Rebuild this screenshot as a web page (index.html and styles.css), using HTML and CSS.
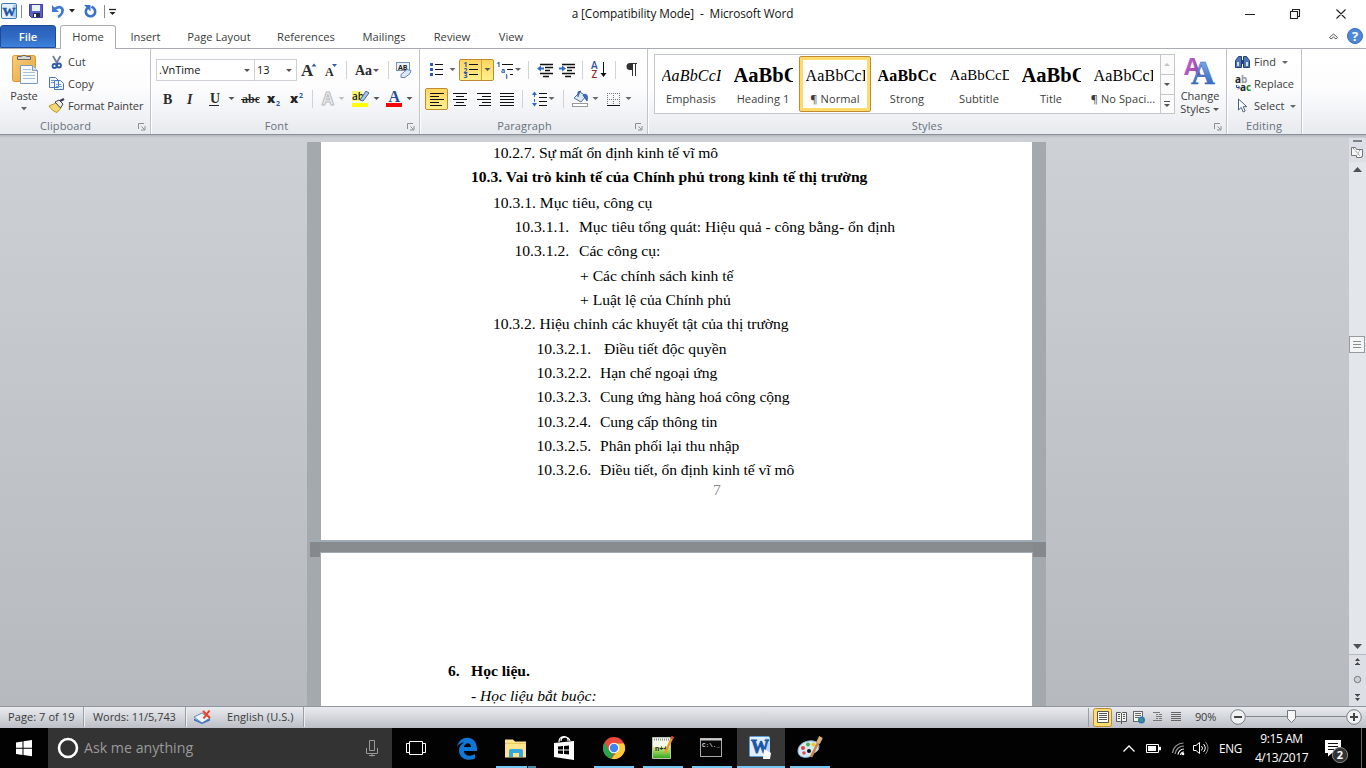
FILE: index.html
```html
<!DOCTYPE html>
<html lang="vi">
<head>
<meta charset="utf-8">
<title>a [Compatibility Mode] - Microsoft Word</title>
<link rel="stylesheet" href="styles.css">
</head>
<body>
<svg class="defs" width="0" height="0">
  <defs>
    <linearGradient id="blue" x1="0" y1="0" x2="0" y2="1"><stop offset="0" stop-color="#8db8f0"/><stop offset="1" stop-color="#2458b8"/></linearGradient>
    <linearGradient id="purple" x1="0" y1="0" x2="1" y2="1"><stop offset="0" stop-color="#d070d8"/><stop offset="1" stop-color="#8a3aa0"/></linearGradient>
    <linearGradient id="green" x1="0" y1="0" x2="0" y2="1"><stop offset="0" stop-color="#d5f08a"/><stop offset="1" stop-color="#37a81d"/></linearGradient>
    <linearGradient id="clip" x1="0" y1="0" x2="1" y2="1"><stop offset="0" stop-color="#f9cf7a"/><stop offset="1" stop-color="#e3a33c"/></linearGradient>
  </defs>
</svg>

<header class="titlebar">
  <svg width="120" height="24" viewBox="0 0 120 24">
    <rect x="1.500" y="3.500" width="15" height="15" rx="1.500" fill="#e4f0fc" stroke="#3a78bd"/>
    <path d="M13 5h3v12h-3z" fill="#a9c9ea"/>
    <text x="2.500" y="16" class="wlogo">W</text>
    <path d="M21.500 5v13M104.500 5v13" stroke="#8c8c8c"/>
    <path d="M29.500 4.500h13v13h-11l-2-2z" fill="#5a62c8" stroke="#3d3f9c"/>
    <path d="M32 5h8v6h-8z" fill="#e9f1fd"/><path d="M33 13h7v4h-7z" fill="#26284f"/><path d="M34 14h2v3h-2z" fill="#fff"/>
    <path d="M54 9.500c6-5 10-1 8 3.500-1 2-2 3-4 4" fill="none" stroke="#3f78cf" stroke-width="2.600"/><path d="M52 5v7h7z" fill="#3f78cf"/>
    <path d="M69 9h6l-3 3.500z" fill="#222"/>
    <path d="M87.500 8a4.700 4.700 0 1 0 6 0l-2-1.500" fill="none" stroke="#3a70d0" stroke-width="2.600"/><path d="M84 5h6.500v6.500z" fill="#3a70d0"/>
    <path d="M109 9.500h7" stroke="#222" stroke-width="1.300"/><path d="M109.500 12h6l-3 3z" fill="#222"/>
  </svg>
  <div class="doc-title">a [Compatibility Mode] &nbsp;-&nbsp; Microsoft Word</div>
  <svg width="136" height="24" viewBox="1230 0 136 24">
    <path d="M1245 14.500h10M1290.500 11.500h7v7h-7zM1292.500 11v-1.500h7v7h-1.500M1336.500 9.500l9 9M1345.500 9.500l-9 9" fill="none" stroke="#222" stroke-width="1.100"/>
  </svg>
</header>

<nav class="tabs">
  <div class="tab file">File</div>
  <div class="tab active">Home</div>
  <div class="tab t-insert">Insert</div>
  <div class="tab t-layout">Page Layout</div>
  <div class="tab t-refs">References</div>
  <div class="tab t-mail">Mailings</div>
  <div class="tab t-review">Review</div>
  <div class="tab t-view">View</div>
  <svg class="push" width="46" height="24" viewBox="1320 25 46 24">
    <path d="M1329.500 37.500l4-3.500 4 3.500-1.500 1.500-2.500-2-2.500 2z" fill="#fff" stroke="#555"/>
    <circle cx="1355" cy="36" r="7.500" fill="#4d88dc" stroke="#3767b5"/>
    <text x="1355" y="41" class="help" text-anchor="middle">?</text>
  </svg>
</nav>

<section class="ribbon">
  <div class="group g-clip">
    <div class="clip-body">
      <div class="paste">
        <svg width="48" height="38" viewBox="0 50 48 38">
          <rect x="12.500" y="55.500" width="23" height="26" rx="2" fill="url(#clip)" stroke="#d39b3c"/>
          <path d="M17.500 59.500v-3h4a3 2.500 0 0 1 5 0h4v3z" fill="#d8d8d8" stroke="#666"/>
          <path d="M20.500 65.500h12l5 5v13h-17z" fill="#f7fafe" stroke="#7d98bd"/>
          <path d="M32.500 65.500v5h5" fill="#cfe0f4" stroke="#7d98bd"/>
          <path d="M23 69.500h8M23 72.500h12M23 75.500h12M23 78.500h12" stroke="#a9c0de"/>
        </svg>
        <span>Paste</span>
        <svg width="8" height="6"><path d="M1 1h6l-3 3.500z" fill="#666"/></svg>
      </div>
      <div class="mini">
        <div class="mini-row"><svg width="20" height="22" viewBox="48 51 20 22"><path d="M53 56l4.500 8M60.500 56l-4.500 8" stroke="#6b7f9c" stroke-width="1.800"/><circle cx="54.500" cy="66" r="2" fill="none" stroke="#2c5cae" stroke-width="1.800"/><circle cx="59" cy="65.500" r="2" fill="none" stroke="#2c5cae" stroke-width="1.800"/></svg>Cut</div>
        <div class="mini-row"><svg width="20" height="22" viewBox="48 73 20 22"><path d="M49.500 77.500h6l3 3v7h-9zM54.500 80.500h6l3 3v6h-9z" fill="#f2f8ff" stroke="#4a76b8"/><path d="M51 80.500h4M51 82.500h3M56 84.500h5M56 86.500h6" stroke="#6d99d4"/></svg>Copy</div>
        <div class="mini-row fp"><svg width="20" height="22" viewBox="48 95 20 22"><path d="M49 106l7-3 5 5-4 4.500c-3-1-6-3-8-6.500z" fill="#f4d873" stroke="#b99225"/><path d="M55 102l4-2 4 4-2.500 4z" fill="#eee" stroke="#444"/><path d="M60 101l4-2" stroke="#443a5c" stroke-width="2.500"/></svg>Format Painter</div>
      </div>
    </div>
    <div class="group-label">Clipboard<svg class="launch" width="9" height="9"><path d="M1.500 7V1.500H7M4.500 4.500l3 3M8 4v4H4" fill="none" stroke="#8a8f96"/></svg></div>
  </div>

  <div class="group g-font">
    <div class="row">
      <div class="combo c-name">.VnTime<svg width="7" height="5"><path d="M0 1h6l-3 3z" fill="#555"/></svg></div>
      <div class="combo c-size">13<svg width="7" height="5"><path d="M0 1h6l-3 3z" fill="#555"/></svg></div>
      <svg width="120" height="22" viewBox="297 59 120 22">
        <text x="301" y="76" class="ic s17">A</text><path d="M311.500 66.500h5l-2.500-3z" fill="#2f5cb0"/>
        <text x="325" y="76" class="ic s11">A</text><path d="M332 64h5l-2.500 3z" fill="#2f5cb0"/>
        <path d="M346.500 61v18M388.500 61v18" stroke="#cfd3d8"/>
        <text x="355" y="75" class="ic s13">Aa</text><path d="M373 69h6l-3 3z" fill="#555"/>
        <rect x="396.500" y="62.500" width="13" height="8" fill="#edf3fb" stroke="#7391ba"/><text x="398" y="69.500" class="sans s8">AB</text>
        <path d="M401 74.500l6-5 4 1-1 3-5 4-4 0z" fill="#dce8f7" stroke="#6a86b0"/>
      </svg>
    </div>
    <div class="row">
      <svg width="264" height="22" viewBox="156 88 264 22">
        <text x="163" y="104" class="ic s13">B</text><text x="187" y="104" class="ic s13 it">I</text>
        <text x="210" y="103" class="ic s13">U</text><path d="M209 105.500h10" stroke="#222"/><path d="M228.500 97h6l-3 3z" fill="#555"/>
        <text x="242" y="103" class="ic s11">abc</text><path d="M241 99.500h18" stroke="#222"/>
        <text x="267" y="103" class="sans s13b">x</text><text x="276" y="106" class="sans s7 bl">2</text>
        <text x="290" y="103" class="sans s13b">x</text><text x="299" y="98" class="sans s7 bl">2</text>
        <path d="M312.500 90v18" stroke="#cfd3d8"/>
        <text x="322" y="105" class="sans ghost">A</text><path d="M338.500 97h6l-3 3z" fill="#c0c0c0"/>
        <path d="M352 91h10v10h-10z" fill="#f7f76a"/><text x="352" y="100" class="sans s10">ab</text><path d="M360 100l6-9 3 2-6 8z" fill="#a9c4ea" stroke="#49678f"/><path d="M352 103h16v4h-16z" fill="#ff0"/><path d="M373.500 97h6l-3 3z" fill="#555"/>
        <text x="388.500" y="102" class="ic s15 navy">A</text><path d="M386 103h16v4h-16z" fill="#f00"/><path d="M406.500 97h6l-3 3z" fill="#555"/>
      </svg>
    </div>
    <div class="group-label">Font<svg class="launch" width="9" height="9"><path d="M1.500 7V1.500H7M4.500 4.500l3 3M8 4v4H4" fill="none" stroke="#8a8f96"/></svg></div>
  </div>

  <div class="group g-para">
    <div class="row">
      <svg width="35" height="22" viewBox="424 59 35 22"><path d="M430 63h3v3h-3zM430 68h3v3h-3zM430 73h3v3h-3z" fill="#2f5cb0"/><path d="M435 64.500h8M435 69.500h8M435 74.500h8" stroke="#111"/><path d="M449.500 68h6l-3 3z" fill="#666"/></svg>
      <div class="pressed p-num"><svg width="33" height="20" viewBox="460 60 33 20"><text x="463.500" y="67" class="sans s7 bl">1</text><text x="463.500" y="72.500" class="sans s7 bl">2</text><text x="463.500" y="78" class="sans s7 bl">3</text><path d="M469 64.500h9M469 69.500h9M469 74.500h9" stroke="#111"/><path d="M481.500 60v20" stroke="#d6a13a"/><path d="M484.500 68h6l-3 3z" fill="#555"/></svg></div>
      <svg width="154" height="22" viewBox="494 59 154 22">
        <text x="496.500" y="67" class="sans s7 bl">1</text><text x="501" y="73" class="sans s7 bl">a</text><text x="505.500" y="79" class="sans s7 bl">i</text>
        <path d="M502 64.500h11M507 69.500h6M510 74.500h3" stroke="#111"/><path d="M515 68h6l-3 3z" fill="#666"/>
        <path d="M528.500 61v18M582.500 61v18M615.500 61v18" stroke="#cfd3d8"/>
        <path d="M540 64.500h13M545 67.500h8M545 70.500h5M540 73.500h13M543 76.500h6M562 64.500h13M567 67.500h8M567 70.500h5M562 73.500h13M565 76.500h6" stroke="#111" stroke-width="1.300"/>
        <path d="M537 68.500l4-3v2h3v2h-3v2zM566 68.500l-4-3v2h-3v2h3v2z" fill="#2e68c8"/>
        <text x="591" y="69" class="sans s10 bl">A</text><text x="591.500" y="77.500" class="sans s10 red">Z</text><path d="M603.500 62v14" stroke="#111"/><path d="M600.500 73h6l-3 4z" fill="#111"/>
        <path d="M632 63.500h5M632.500 64v12M635.500 64v12" stroke="#333"/><path d="M632 63h-2a3 3 0 0 0 0 7h2z" fill="#333"/>
      </svg>
    </div>
    <div class="row">
      <div class="pressed p-left"><svg width="21" height="20" viewBox="426 89 21 20"><path d="M430 93.500h14M430 96.500h9M430 99.500h14M430 102.500h9M430 105.500h12" stroke="#111"/></svg></div>
      <svg width="200" height="22" viewBox="448 88 200 22">
        <path d="M453 93.500h14M456 96.500h8M453 99.500h14M456 102.500h8M454 105.500h12M477 93.500h14M482 96.500h9M477 99.500h14M482 102.500h9M479 105.500h12M500 93.500h14M500 96.500h14M500 99.500h14M500 102.500h14M500 105.500h14" stroke="#111"/>
        <path d="M522.500 90v18M563.500 90v18" stroke="#cfd3d8"/>
        <path d="M532 95l2.500-3.500L537 95zM532 103l2.500 3.500 2.500-3.500z" fill="#2e68c8"/><path d="M534.500 94v10" stroke="#2e68c8" stroke-dasharray="3 2"/><path d="M539 93.500h8M539 97.500h8M539 101.500h8M539 105.500h8" stroke="#111"/><path d="M548.500 97h6l-3 3z" fill="#666"/>
        <path d="M574 98l6-6 6 4-5 6z" fill="#dce8f5" stroke="#58708f"/><path d="M578 97v-5l3-1M583 95c4-2 5 1 4 6-2-3-3-4-4-6z" fill="#3b6fc4" stroke="#345a98"/><rect x="572.500" y="103.500" width="15" height="3" fill="#fff" stroke="#999"/><path d="M592.500 97h6l-3 3z" fill="#666"/>
        <path d="M607.500 93v12M613.500 93v12M619.500 93v12M607 93.500h13M607 99.500h13" stroke="#777" stroke-dasharray="1 1"/><path d="M607 105.500h13" stroke="#111"/><path d="M625.500 97h6l-3 3z" fill="#666"/>
      </svg>
    </div>
    <div class="group-label">Paragraph<svg class="launch" width="9" height="9"><path d="M1.500 7V1.500H7M4.500 4.500l3 3M8 4v4H4" fill="none" stroke="#8a8f96"/></svg></div>
  </div>

  <div class="group g-styles">
    <div class="styles-body">
      <div class="gallery">
        <div class="style"><b class="smp s-emph">AaBbCcI</b><span>Emphasis</span></div>
        <div class="style"><b class="smp s-head">AaBbC</b><span>Heading 1</span></div>
        <div class="style sel"><b class="smp s-norm">AaBbCcI</b><span>¶ Normal</span></div>
        <div class="style"><b class="smp s-strong">AaBbCc</b><span>Strong</span></div>
        <div class="style"><b class="smp s-sub">AaBbCcD</b><span>Subtitle</span></div>
        <div class="style"><b class="smp s-head">AaBbC</b><span>Title</span></div>
        <div class="style"><b class="smp s-norm">AaBbCcI</b><span>¶ No Spaci...</span></div>
        <svg class="push" width="14" height="58" viewBox="1160 55 14 58"><rect x="1160" y="55" width="14" height="58" fill="#fbfbfc"/><path d="M1160.500 55v58M1160 74.500h14M1160 94.500h14" stroke="#c3c7cc"/><path d="M1164 66h6l-3-3z" fill="#c4c4c4"/><path d="M1164 83h6l-3 3zM1164 104h6l-3 3z" fill="#555"/><path d="M1164 101.500h6" stroke="#555"/></svg>
      </div>
      <div class="change">
        <svg width="50" height="38" viewBox="1175 50 50 38"><text x="1184" y="74" class="sans bigA">A</text><text x="1191" y="83" class="ic bigB">A</text></svg>
        <span>Change</span><span>Styles <svg width="7" height="6"><path d="M0 1h6l-3 3z" fill="#555"/></svg></span>
      </div>
    </div>
    <div class="group-label">Styles<svg class="launch" width="9" height="9"><path d="M1.500 7V1.500H7M4.500 4.500l3 3M8 4v4H4" fill="none" stroke="#8a8f96"/></svg></div>
  </div>

  <div class="group g-edit">
    <div class="mini">
      <div class="mini-row"><svg width="24" height="22" viewBox="1230 51 24 22"><path d="M1235.500 67.500v-7l3-4h3v11zM1243.500 67.500v-11h3l3 4v7z" fill="#4c76b8" stroke="#243f78"/><path d="M1241 60h3v4h-3z" fill="#243f78"/><path d="M1237 62h2v4h-2zM1246 62h2v4h-2z" fill="#cfe0fa"/></svg>Find<svg class="dd" width="7" height="5"><path d="M0 1h6l-3 3z" fill="#666"/></svg></div>
      <div class="mini-row"><svg width="24" height="22" viewBox="1230 73 24 22"><text x="1235" y="83" class="sans s10b">a</text><text x="1241" y="83" class="sans s10b gray">b</text><text x="1240" y="90.500" class="sans s10b">a</text><text x="1246" y="90.500" class="sans s10b grn">c</text><path d="M1236.500 85v2.500h3M1238 85.500l2 2-2 2" fill="none" stroke="#2e4c96"/></svg>Replace</div>
      <div class="mini-row"><svg width="24" height="22" viewBox="1230 95 24 22"><path d="M1238.500 99v11l2.700-2.600 2 4.600 2-1-2-4.300h3.600z" fill="#fff" stroke="#4a5f86"/></svg>Select<svg class="dd" width="7" height="5"><path d="M0 1h6l-3 3z" fill="#666"/></svg></div>
    </div>
    <div class="group-label">Editing</div>
  </div>
</section>

<main class="work">
  <div class="canvas">
    <article class="page p1">
      <p class="first l1"><span class="k01">10.2.7. Sự mất ổn định kinh tế vĩ mô</span></p>
      <p class="bold l0"><span>10.3. Vai trò kinh tế của Chính phủ trong kinh tế thị trường</span></p>
      <p class="l1"><span>10.3.1. Mục tiêu, công cụ</span></p>
      <p class="l2"><span class="num">10.3.1.1.</span><span class="tight1">Mục tiêu tổng quát: Hiệu quả - công bằng- ổn định</span></p>
      <p class="l2"><span class="num">10.3.1.2.</span><span>Các công cụ:</span></p>
      <p class="l4"><span class="tight1">+ Các chính sách kinh tế</span></p>
      <p class="l4"><span class="tight1">+ Luật lệ của Chính phủ</span></p>
      <p class="l1"><span class="tight2">10.3.2. Hiệu chỉnh các khuyết tật của thị trường</span></p>
      <p class="l3"><span class="num">10.3.2.1.</span><span>&nbsp;Điều tiết độc quyền</span></p>
      <p class="l3"><span class="num">10.3.2.2.</span><span class="tight2">Hạn chế ngoại ứng</span></p>
      <p class="l3"><span class="num">10.3.2.3.</span><span class="tight2">Cung ứng hàng hoá công cộng</span></p>
      <p class="l3"><span class="num">10.3.2.4.</span><span class="tight3">Cung cấp thông tin</span></p>
      <p class="l3"><span class="num">10.3.2.5.</span><span class="tight2">Phân phối lại thu nhập</span></p>
      <p class="l3"><span class="num">10.3.2.6.</span><span class="tight2">Điều tiết, ổn định kinh tế vĩ mô</span></p>
      <p class="pageno">7</p>
    </article>
    <div class="break"></div>
    <article class="page p2">
      <p class="bold lm"><span class="n6">6.</span><span>Học liệu.</span></p>
      <p class="ital l0"><span>- Học liệu bắt buộc:</span></p>
    </article>
  </div>
  <svg class="scroll" width="17" height="571" viewBox="1349 135 17 571">
    <rect x="1349" y="138" width="17" height="568" fill="#dce0e6"/>
    <rect x="1349" y="162" width="17" height="492" fill="#e3e6eb"/>
    <path d="M1353 140h9v2h-9z" fill="#7d8289"/>
    <path d="M1351.500 147.500h4l1 2h6v7h-1v1h-5v-2h-5z" fill="#f5f6f7" stroke="#777"/><path d="M1353 148l7 8M1360 150l-3 5" stroke="#777" stroke-dasharray="1 1"/>
    <path d="M1353 172h9l-4.500-5zM1353 644h9l-4.500 5z" fill="#4e5257"/>
    <rect x="1349.500" y="336.500" width="15" height="16" fill="#f4f5f7" stroke="#969ba2"/><path d="M1353 341.500h8M1353 344.500h8M1353 347.500h8" stroke="#888d94"/>
    <path d="M1349 654.500h17" stroke="#b5bac2"/>
    <path d="M1355 661h5l-2.500-3zM1355 665h5l-2.500-3z" fill="#444"/><path d="M1355 664.500h5" stroke="#444"/>
    <circle cx="1357.500" cy="679.500" r="3.200" fill="#ccd0d4" stroke="#777"/>
    <path d="M1355 694h5l-2.500 3zM1355 698h5l-2.500 3z" fill="#444"/><path d="M1355 694.500h5" stroke="#444"/>
  </svg>
</main>

<footer class="status">
  <span class="st st-page">Page: 7 of 19</span>
  <span class="st st-words">Words: 11/5,743</span>
  <span class="st st-proof"><svg width="34" height="20" viewBox="186 707 34 20"><path d="M194 717l8-4 8 5-8 5z" fill="#eef4fb" stroke="#6789b8"/><path d="M194 718.500l8 4.500 8-4.500v2l-8 3.500-8-3.500z" fill="#3d6dc0"/><path d="M203 711l7 7M209.500 710.500l-6 8" stroke="#ee4026" stroke-width="2"/></svg></span>
  <span class="st st-lang">English (U.S.)</span>
  <svg class="push" width="106" height="21" viewBox="1084 707 106 21">
    <path d="M1088.500 708v19" stroke="#9a9fa6"/>
    <rect x="1093.500" y="708.500" width="18" height="18" rx="2" fill="#ffdf72" stroke="#c08a35"/>
    <path d="M1097.500 711.500h11v11h-11z" fill="#fff" stroke="#555"/><path d="M1099 713.500h8M1099 715.500h8M1099 717.500h8M1099 719.500h8" stroke="#555"/>
    <path d="M1116.500 712.500h4l1 1 1-1h4v9h-4l-1 1-1-1h-4zM1121.500 713v11" fill="#f3f4f6" stroke="#555"/><path d="M1118 714.500h2M1118 716.500h2M1118 718.500h2M1123 714.500h2M1123 716.500h2M1123 718.500h2" stroke="#555"/>
    <rect x="1133.500" y="711.500" width="9" height="10" fill="#f3f4f6" stroke="#666"/><path d="M1135 713.500h6M1135 715.500h6M1135 717.500h4" stroke="#666"/><circle cx="1141.500" cy="720" r="3.500" fill="#2f78b8"/><path d="M1139 720l3-2 1 4z" fill="#53a04c"/>
    <path d="M1153 712.500h7M1156 714.500h2M1159 714.500h3M1156 716.500h6M1156 718.500h2M1159 718.500h3M1153 720.500h9" stroke="#777"/>
    <path d="M1171 712.500h10M1171 714.500h10M1171 716.500h10M1171 718.500h10M1171 720.500h10" stroke="#666"/>
  </svg>
  <span class="zoom">90%</span>
  <svg width="142" height="21" viewBox="1224 707 142 21">
    <path d="M1246 716.500h100" stroke="#7f858c"/>
    <circle cx="1238" cy="717" r="7.300" fill="#f0f1f3" stroke="#777d84"/><circle cx="1354" cy="717" r="7.300" fill="#f0f1f3" stroke="#777d84"/>
    <path d="M1234 717h8M1350 717h8M1354 713v8" stroke="#444" stroke-width="2"/>
    <path d="M1287.500 710.500h8v8l-4 4-4-4z" fill="#f8f8f9" stroke="#6f757c"/>
  </svg>
</footer>

<div class="taskbar">
  <svg width="48" height="40" viewBox="0 728 48 40"><path d="M16 742.500l6.500-1v6.200H16zM23.500 741.300l8.500-1.300v7.700h-8.500zM16 748.700h6.500v6.200l-6.500-1zM23.500 748.700H32v7.500l-8.500-1.200z" fill="#fff"/></svg>
  <div class="search">
    <svg width="36" height="40" viewBox="48 728 36 40"><circle cx="68" cy="748" r="9" fill="none" stroke="#fff" stroke-width="2.600"/></svg>
    <span>Ask me anything</span>
    <svg class="push" width="36" height="40" viewBox="356 728 36 40"><path d="M369.500 740.500h5v10h-5zM366.500 748v5.500h11V748M372 753.500v3M369 755.500h6" fill="none" stroke="#999"/></svg>
  </div>
  <svg width="50" height="40" viewBox="392 728 50 40"><path d="M409.500 741.500h13v13h-13zM409 743.500h-2.500v9h2.500M423 743.500h2.500v9H423" fill="none" stroke="#fff"/></svg>
  <svg width="49" height="40" viewBox="442 728 49 40"><path fill-rule="evenodd" d="M457 747c2-12 20-13 20 2v2h-13c0 5 7 6 11 3v4.500c-7 3.500-16 0-16-8 0-4 2-6 5-8-3 0-5.500 1.500-7 4.500zM464 747h7c0-5-6-5-7 0z" fill="#0f78d7"/></svg>
  <svg width="49" height="40" viewBox="491 728 49 40"><path d="M505 739.500h8l2 2h11v16h-21z" fill="#ffe48f"/><path d="M505 743h21v1h-21z" fill="#f0c860"/><path d="M509 757v-6q0-2 2-2h10q2 0 2 2v6h-4v-4h-6v4z" fill="#35a9dc"/><path d="M496 766h31v2h-31z" fill="#76c8f4"/><path d="M528 766h8v2h-8z" fill="#4c87aa"/></svg>
  <svg width="49" height="40" viewBox="540 728 49 40"><path d="M554 743l20-2v19l-20-3z" fill="#fff"/><path d="M559 742c0-7 10-7 9-1M561 741c0-5 8-5 9 0" fill="none" stroke="#fff" stroke-width="1.200"/><path d="M558 746.500l5-.4v3.400h-5zM564 746l5-.5v4h-5zM558 750.500h5v3.500l-5-.5zM564 750.500h5v4l-5-.5z" fill="#000"/></svg>
  <svg width="49" height="40" viewBox="589 728 49 40"><circle cx="614" cy="748" r="11" fill="#ea4b3d"/><path d="M604.500 742.500L609 750.500l5 3-2.500 5.300A11 11 0 0 1 604.500 742.500z" fill="#2ba24c"/><path d="M614 743.500h10a11 11 0 0 1-12.500 15.300l6.500-8.500z" fill="#fbcd34"/><circle cx="614" cy="748" r="5.300" fill="#fff"/><circle cx="614" cy="748" r="4.200" fill="#4284ee"/><path d="M594 766h40v2h-40z" fill="#76c8f4"/></svg>
  <svg width="49" height="40" viewBox="638 728 49 40"><path d="M652.500 737.500h18v21h-18z" fill="#f4fae8" stroke="#b9c5a9"/><path d="M653 747h17v11h-17z" fill="url(#green)"/><path d="M654 739.500h15" stroke="#889" stroke-dasharray="1 1" stroke-width="2"/><text x="655" y="751" class="mono">n++</text><path d="M665 753l7-15" stroke="#e79a28" stroke-width="2.500"/><path d="M671.500 739l1.500-2.500" stroke="#cf4b43" stroke-width="3"/><path d="M643 766h40v2h-40z" fill="#76c8f4"/></svg>
  <svg width="49" height="40" viewBox="687 728 49 40"><rect x="700.500" y="738.500" width="21" height="18" fill="#080808" stroke="#aaa"/><path d="M700 739.500h22" stroke="#ccc" stroke-width="2"/><text x="702" y="747" class="cmd">C:\._</text><path d="M692 766h40v2h-40z" fill="#76c8f4"/></svg>
  <svg width="49" height="40" viewBox="736 728 49 40"><path d="M737 728h48v38h-48z" fill="#373737"/><rect x="749.500" y="736.500" width="20" height="20" rx="1" fill="#e1effc" stroke="#5a9ada"/><path d="M765 738h5v17h-5z" fill="#b7d6f3"/><text x="751" y="753" class="wlogo big">W</text><path d="M764 749l7 4-1 6h-7z" fill="#fff"/><path d="M737 766h48v2h-48z" fill="#76c8f4"/></svg>
  <svg width="49" height="40" viewBox="785 728 49 40"><path d="M798 751c0-7 8-11 15-10 6 1 7 5 5 9-2 3-4 2-5 4-1 4-15 6-15-3z" fill="#d6e9f6" stroke="#8ab4d4"/><circle cx="803" cy="748" r="2" fill="#e33f36"/><circle cx="808" cy="744.500" r="2" fill="#48b340"/><circle cx="813.500" cy="744.500" r="2" fill="#f0c22e"/><circle cx="804" cy="753" r="1.800" fill="#e05048"/><circle cx="809" cy="751" r="2" fill="#111"/><path d="M811 757l8-16" stroke="#cd8442" stroke-width="2.600"/><path d="M818 743l3-6" stroke="#d9b078" stroke-width="4"/><path d="M790 766h40v2h-40z" fill="#76c8f4"/></svg>
  <svg class="push" width="98" height="40" viewBox="1116 728 98 40"><path d="M1123.500 751.500l5.500-5.500 5.500 5.500" fill="none" stroke="#fff" stroke-width="1.300"/><path d="M1146.500 744.500h12v8h-12zM1159.500 747v3h1v-3z" fill="none" stroke="#fff"/><path d="M1148 746h8v5h-8z" fill="#fff"/><path d="M1172.500 753a11 11 0 0 1 11-10M1175 754a9 9 0 0 1 9-8" fill="none" stroke="#999" stroke-width="1.200"/><path d="M1178 754.500a6 6 0 0 1 6-5.500M1180.500 755a3.500 3.500 0 0 1 3.500-3" fill="none" stroke="#fff" stroke-width="1.200"/><circle cx="1183" cy="754" r="1.300" fill="#fff"/><path d="M1193.500 745.500h2.500l3.500-3v11l-3.500-3h-2.500zM1201.500 746q2 2 0 4.500M1203.500 744q3.500 4 0 8" fill="none" stroke="#fff"/><path d="M1205.500 742q5 6 0 12" fill="none" stroke="#888"/></svg>
  <span class="lang">ENG</span>
  <div class="clock"><span class="ck1">9:15 AM</span><span class="ck2">4/13/2017</span></div>
  <svg width="50" height="40" viewBox="1316 728 50 40"><path d="M1325 740h16v13h-9l-4 3.500V753h-3z" fill="#fff"/><path d="M1328 743.500h10M1328 746.500h10M1328 749.500h6" stroke="#111"/><circle cx="1340" cy="755" r="7.600" fill="#333" stroke="#888"/><text x="1340" y="759" class="badge" text-anchor="middle">2</text><path d="M1361.500 728v40" stroke="#666"/></svg>
</div>
</body>
</html>
```
FILE: styles.css
```css
* { box-sizing: border-box; }
body { margin: 0; width: 1366px; height: 768px; overflow: hidden; background: #fff; font: 11px/14px "Open Sans", "Noto Sans", sans-serif; color: #3b3b3b; display: flex; flex-direction: column; }
svg { display: block; flex: none; }
.push { margin-left: auto; }

.titlebar { height: 25px; flex: none; display: flex; }
.doc-title { flex: 1; text-align: center; padding-left: 15px; font-size: 11.800px; line-height: 26px; color: #111; letter-spacing: -.1px; }
.wlogo { font: bold 13px "Liberation Serif", serif; fill: #1c55a5; stroke: #1c55a5; stroke-width: .5px; }
.wlogo.big { font-size: 18px; stroke-width: .8px; }

.tabs { height: 24px; flex: none; display: flex; border-bottom: 1px solid #a9adb3; }
.tab { line-height: 24px; text-align: center; font-size: 11.200px; letter-spacing: 0; flex: none; white-space: nowrap; }
.file { width: 56px; margin-right: 4px; background: linear-gradient(#2a5fb6, #2f6ac4 50%, #3f83dc); border: 1px solid #1d4a9b; border-radius: 3px 3px 0 0; color: #fff; font-weight: 600; line-height: 22px; }
.active { width: 56px; height: 24px; border: 1px solid #a9adb3; border-bottom: 0; border-radius: 3px 3px 0 0; background: #fff; line-height: 22px; }
.t-insert { width: 59px; } .t-layout { width: 88px; } .t-refs { width: 86px; } .t-mail { width: 70px; } .t-review { width: 66px; } .t-view { width: 52px; }

.ribbon { height: 86px; flex: none; display: flex; background: linear-gradient(#fff, #fdfdfe 45%, #e7eaee); border-bottom: 1px solid #8b9199; }
.group { display: flex; flex-direction: column; border-right: 1px solid #c0c4ca; box-shadow: 1px 0 #fff; height: 85px; flex: none; }
.g-clip { width: 151px; } .g-font { width: 269px; padding: 10px 0 0 5px; } .g-para { width: 228px; padding: 10px 0 0 4px; } .g-styles { width: 579px; } .g-edit { width: 75px; }
.group-label { margin-top: auto; height: 17px; line-height: 18px; text-align: center; color: #68707c; display: flex; justify-content: center; letter-spacing: .15px; position: relative; }
.launch { position: absolute; right: 4px; top: 5px; }
.g-clip .group-label { padding-right: 19px; }
.g-font .group-label { padding-right: 22px; }
.g-para .group-label { padding-right: 22px; }
.g-styles .group-label { padding-right: 20px; }
.clip-body { display: flex; }
.paste { width: 48px; display: flex; flex-direction: column; align-items: center; padding-top: 1px; }
.paste span { height: 18px; line-height: 16px; letter-spacing: -.15px; }
.mini { padding-top: 2px; }
.mini-row { height: 22px; display: flex; align-items: center; white-space: nowrap; line-height: 22px; }
.fp { letter-spacing: -.1px; }
.g-edit .mini { padding-left: 3px; }
.dd { margin-left: 6px; margin-top: 1px; }
.row { height: 29px; display: flex; }
.combo { height: 22px; border: 1px solid #cdd0d5; background: #fff; display: flex; align-items: center; justify-content: space-between; padding: 0 3px 0 2px; color: #111; }
.c-name { width: 99px; } .c-size { width: 43px; margin-left: -1px; }
.pressed { height: 22px; border: 1px solid #c28a30; border-radius: 2px; background: linear-gradient(#ffd560, #ffe57b 60%, #fff08c); }
.p-num { width: 35px; } .p-left { width: 23px; margin-left: 1px; }

.ic { font-family: "Liberation Serif", serif; font-weight: bold; fill: #2b2b2b; }
.sans { font-family: "Open Sans", sans-serif; fill: #222; }
.s17 { font-size: 17px; } .s15 { font-size: 16px; } .s13 { font-size: 14px; } .s11 { font-size: 12px; } .it { font-style: italic; }
.s13b { font-size: 13px; font-weight: 800; } .s10 { font-size: 10px; font-weight: 600; } .s10b { font-size: 10px; font-weight: 700; } .s8 { font-size: 7px; font-weight: 700; } .s7 { font-size: 7px; font-weight: 700; }
.bl { fill: #2a55a8; } .navy { fill: #2a4f93; } .red { fill: #9c2b2b; } .gray { fill: #999; } .grn { fill: #128a20; }
.ghost { font-size: 17px; font-weight: 700; fill: #eee; stroke: #bbb; stroke-width: 1px; }
.bigA { font-size: 24px; font-weight: 700; fill: url(#purple); }
.bigB { font-size: 33px; fill: url(#blue); stroke: #2f62b4; stroke-width: .5px; }
.help { font: bold 13px "Open Sans", sans-serif; fill: #fff; }

.styles-body { display: flex; padding: 5px 0 0 6px; }
.gallery { width: 521px; height: 60px; border: 1px solid #c3c7cc; background: #fff; display: flex; }
.style { width: 72px; height: 56px; margin-top: 1px; padding: 6px 6px 0; flex: none; display: flex; flex-direction: column; align-items: center; white-space: nowrap; }
.style span { line-height: 19px; letter-spacing: .1px; }
.sel { border: 1px solid #c28a30; border-radius: 2px; box-shadow: inset 0 0 0 3px #ffdb6b; padding: 5px 5px 0; }
.smp { display: block; width: 59px; height: 27px; line-height: 27px; overflow: hidden; font-family: "Liberation Serif", serif; font-weight: normal; color: #000; font-size: 15px; }
.s-emph { font-style: italic; font-size: 16px; letter-spacing: .2px; } .s-head { font-weight: bold; font-size: 20.500px; } .s-norm { font-size: 16px; letter-spacing: .2px; } .s-strong { font-weight: bold; font-size: 16px; letter-spacing: .2px; } .s-sub { font-size: 15px; letter-spacing: .1px; }
.change { width: 50px; display: flex; flex-direction: column; align-items: center; margin-top: -4px; line-height: 13px; padding-top: 1px; }
.change svg { display: inline-block; }
.change > svg { display: block; }

.work { height: 571px; flex: none; display: flex; justify-content: space-between; background: linear-gradient(#b4b8be, #cdd0d5 3px, #b6babf); }
.canvas { margin-left: 307px; width: 739px; height: 564px; margin-top: 7px; overflow: hidden; background: #a4a9ae; }
.page { margin: 0 14px; background: #fff; font: 15.600px/24.330px "Liberation Serif", serif; color: #000; white-space: nowrap; }
.page p { margin: 0; height: 24.330px; }
.p1 { height: 398px; }
.p2 { height: 155px; padding-top: 106px; }
.break { height: 13px; margin: 0 0 0 3px; background: #898c8f; border: solid #a1abb5; border-width: 2px 0 1px; position: relative; }
.break::before, .break::after { content: ""; position: absolute; top: 0; height: 15px; width: 10px; background: #85898d; left: 0; }
.break::after { left: auto; right: 0; width: 13px; }
.page .first { line-height: 22px; height: 22px; }
.page .bold { font-weight: bold; }
.p1 .bold { line-height: 25.500px; height: 26.700px; }
.ital { font-style: italic; padding-top: 1px; }
.l0 { padding-left: 150px; } .l1 { padding-left: 172px; } .l2 { padding-left: 193.500px; } .l3 { padding-left: 215.500px; } .l4 { padding-left: 259px; } .lm { padding-left: 127px; }
.num { display: inline-block; width: 63.500px; }
.l2 .num { width: 64.500px; }
.n6 { display: inline-block; width: 23px; }
.k01 { letter-spacing: -.11px; }
.tight1 { letter-spacing: -.02px; } .tight2 { letter-spacing: -.045px; } .tight3 { letter-spacing: -.1px; }
.page .pageno { text-align: center; padding-left: 81px; color: #888; height: 20px; line-height: 14px; }

.status { height: 22px; flex: none; display: flex; border-top: 1px solid #8f969f; background: linear-gradient(#e9ebef, #bcc0c6); line-height: 20px; }
.st { border-right: 1px solid #9a9fa6; box-shadow: 1px 0 #eceef0; height: 20px; flex: none; white-space: nowrap; }
.st-page { width: 84px; padding-left: 8px; letter-spacing: .08px; } .st-words { width: 102px; padding-left: 9px; letter-spacing: -.05px; } .st-proof { width: 34px; border: 0; box-shadow: none; } .st-lang { width: 84px; padding-left: 7px; letter-spacing: .08px; }
.zoom { width: 34px; padding-left: 5px; letter-spacing: -.2px; }

.taskbar { height: 40px; flex: none; display: flex; background: #020202; color: #fff; }
.search { width: 344px; background: #333; display: flex; color: #9a9a9a; font-size: 14.200px; line-height: 40px; }
.lang { width: 37px; padding-left: 5px; font-size: 11.700px; line-height: 40px; letter-spacing: -.3px; }
.clock { width: 65px; padding: 1px 4px 0 0; display: flex; flex-direction: column; align-items: center; font-size: 12px; line-height: 19px; white-space: nowrap; letter-spacing: -.4px; }
.badge { font: 700 11px "Open Sans", sans-serif; fill: #fff; }
.cmd { font: bold 6px "Liberation Mono", monospace; fill: #ddd; }
.mono { font: bold 7px "Liberation Mono", monospace; fill: #223; }
```
